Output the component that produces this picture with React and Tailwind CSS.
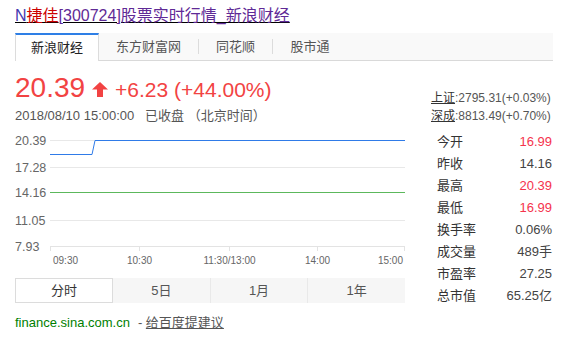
import React from 'react';

const font = { fontFamily: '"Liberation Sans", "Noto Sans CJK SC", sans-serif' };

const sites = [
  { name: '新浪财经', w: 'w-[84px]', active: true },
  { name: '东方财富网', w: 'w-[99px]' },
  { name: '同花顺', w: 'w-[73px]' },
  { name: '股市通', w: 'w-[74px]' },
];

const stats = [
  ['今开', '16.99', true],
  ['昨收', '14.16', false],
  ['最高', '20.39', true],
  ['最低', '16.99', true],
  ['换手率', '0.06%', false],
  ['成交量', '489手', false],
  ['市盈率', '27.25', false],
  ['总市值', '65.25亿', false],
];

function Chart() {
  const grid = [
    { y: 12.5, label: '20.39' },
    { y: 39.5, label: '17.28' },
    { y: 64.5, label: '14.16' },
    { y: 92.5, label: '11.05' },
  ];
  const ticks = [35.5, 124.5, 214.5, 302.5, 389.5];
  return (
    <svg width="390" height="142" className="block" style={font}>
      {grid.map((g) => (
        <g key={g.label}>
          <line x1="35" x2="390" y1={g.y} y2={g.y} stroke="#e8e8e8" strokeWidth="1" shapeRendering="crispEdges" />
          <text x="0" y={g.y + 4} fontSize="12.5" fill="#666">{g.label}</text>
        </g>
      ))}
      <line x1="35" x2="390" y1="118.5" y2="118.5" stroke="#e3e3e3" shapeRendering="crispEdges" />
      <text x="0" y="122.5" fontSize="12.5" fill="#666">7.93</text>
      {ticks.map((x) => (
        <line key={x} x1={x} x2={x} y1="118" y2="123" stroke="#e3e3e3" shapeRendering="crispEdges" />
      ))}
      <line x1="35" x2="390" y1="64.5" y2="64.5" stroke="#5cb85c" strokeWidth="1" shapeRendering="crispEdges" />
      <polyline points="35,26.5 77,26.5 80,12.5 390,12.5" fill="none" stroke="#2f7be8" strokeWidth="1" />
      <g fontSize="10" fill="#666">
        <text x="38" y="135.5">09:30</text>
        <text x="124.5" y="135.5" textAnchor="middle">10:30</text>
        <text x="214.5" y="135.5" textAnchor="middle">11:30/13:00</text>
        <text x="302.5" y="135.5" textAnchor="middle">14:00</text>
        <text x="388" y="135.5" textAnchor="end">15:00</text>
      </g>
    </svg>
  );
}

export default function App() {
  const tabs = [];
  sites.forEach((s, i) => {
    if (i > 1) tabs.push(<div key={'sep' + i} className="w-px h-[15px] self-center bg-[#dcdcdc]" />);
    tabs.push(
      <div
        key={s.name}
        className={
          s.active
            ? `${s.w} h-[28px] flex items-center justify-center bg-white border-t-2 border-t-[#2e7fe6] border-x border-x-[#dcdcdc] text-[13px] text-[#222]`
            : `${s.w} h-[27px] flex items-center justify-center text-[13px] text-[#555]`
        }
      >
        {s.name}
      </div>
    );
  });

  return (
    <div className="w-[575px] h-[337px] bg-white overflow-hidden pl-[15px] pt-1" style={font}>
      {/* 标题 */}
      <div className="text-[16px] leading-[24px] underline">
        <span className="text-[#4438b0]">N</span>
        <span className="text-[#cc0000]">捷佳</span>
        <span className="text-[#5f2a96]">[300724]股票实时行情_新浪财经</span>
      </div>

      {/* 数据来源 */}
      <div className="mt-[5px] w-[538px] h-[28px] flex bg-[#f9f9f9] border-b border-[#d9d9d9]">
        {tabs}
      </div>

      <div className="flex">
        {/* 左侧 */}
        <div className="w-[390px]">
          <div className="mt-[11px] flex items-baseline text-[#f24343] h-[32px]">
            <span className="text-[28px] leading-[32px]">20.39</span>
            <svg width="16" height="15" viewBox="0 0 16 15" className="ml-[7px] mr-[7px]">
              <path d="M8 0 L16 7.5 L11 7.5 L11 15 L5 15 L5 7.5 L0 7.5 Z" fill="#f24343" />
            </svg>
            <span className="text-[21px] leading-[32px]">+6.23 (+44.00%)</span>
          </div>
          <div className="mt-[2px] text-[13px] leading-[20px] text-[#555]">
            2018/08/10 15:00:00 &nbsp;&nbsp;已收盘 （北京时间）
          </div>
          <div className="mt-[2px]">
            <Chart />
          </div>
          <div className="mt-[8px] flex h-[25px] text-[13px]">
            <div className="w-[98px] flex items-center justify-center bg-white border border-[#dcdcdc] text-[#333]">分时</div>
            <div className="flex-1 flex items-center justify-center bg-[#f6f6f6] text-[#555]">5日</div>
            <div className="flex-1 flex items-center justify-center bg-[#f6f6f6] border-l border-[#e9e9e9] text-[#555]">1月</div>
            <div className="flex-1 flex items-center justify-center bg-[#f6f6f6] border-l border-[#e9e9e9] text-[#555]">1年</div>
          </div>
          <div className="mt-[10px] text-[13px] leading-[20px] text-[#555]">
            <span className="text-[#008000]">finance.sina.com.cn</span>
            <span className="ml-[8px]">- </span>
            <span className="underline">给百度提建议</span>
          </div>
        </div>

        {/* 右侧 */}
        <div className="ml-[26px] w-[122px] pt-[28px]">
          <div className="text-[12px] leading-[18px] text-[#555] whitespace-nowrap">
            <span className="underline text-[#333]">上证</span>:2795.31(+0.03%)
          </div>
          <div className="text-[12px] leading-[18px] text-[#555] whitespace-nowrap">
            <span className="underline text-[#333]">深成</span>:8813.49(+0.70%)
          </div>
          <div className="mt-[6px]">
            {stats.map(([k, v, red]) => (
              <div key={k} className="h-[22px] flex items-center justify-between pl-[6px] pr-px text-[13px]">
                <span className="text-[#333]">{k}</span>
                <span className={red ? 'text-[#f5334d]' : 'text-[#444]'}>{v}</span>
              </div>
            ))}
          </div>
        </div>
      </div>
    </div>
  );
}
